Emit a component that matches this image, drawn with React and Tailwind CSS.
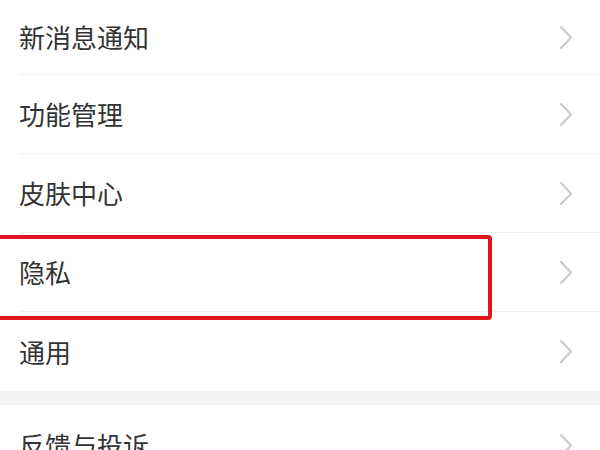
const items = ["新消息通知", "功能管理", "皮肤中心", "隐私", "通用"];

const Chevron = () => (
  <svg width="14" height="25" viewBox="0 0 14 25" fill="none">
    <polyline
      points="2,2 12,12.5 2,23"
      stroke="#c8c8c8"
      strokeWidth="2"
      strokeLinecap="round"
      strokeLinejoin="round"
    />
  </svg>
);

const Row = ({ label, height, divider, highlight }) => (
  <div className="relative pl-[19px]">
    <div
      className={`flex items-center justify-between pr-[27px] ${height} ${
        divider ? "border-b border-[#efefef]" : ""
      }`}
    >
      <span className="text-[26px] leading-none text-[#333333]">{label}</span>
      <Chevron />
    </div>
    {highlight && (
      <div className="absolute left-[-6px] top-[2px] h-[85px] w-[498px] rounded-[4px] border-[4px] border-[#e0161c]" />
    )}
  </div>
);

export default function App() {
  return (
    <div
      className="h-[450px] w-[600px] overflow-hidden bg-white"
      style={{ fontFamily: '"Noto Sans CJK SC", "Noto Sans", sans-serif' }}
    >
      <Row label={items[0]} height="h-[75px]" divider />
      <Row label={items[1]} height="h-[79px]" divider />
      <Row label={items[2]} height="h-[79px]" divider />
      <Row label={items[3]} height="h-[79px]" divider highlight />
      <Row label={items[4]} height="h-[79px]" />
      <div className="h-[14px] bg-[#f3f3f3]" />
      <Row label="反馈与投诉" height="h-[80px]" />
    </div>
  );
}
